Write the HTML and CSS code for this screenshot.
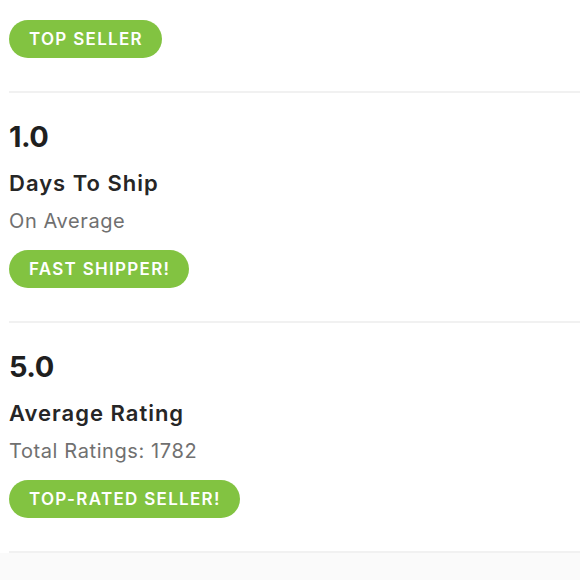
FILE: index.html
```html
<!DOCTYPE html>
<html>
<head>
<meta charset="utf-8">
<link rel="stylesheet" href="styles.css">
</head>
<body>
<div class="page">
  <section class="stat stat-top">
    <span class="badge">TOP SELLER</span>
  </section>
  <section class="stat">
    <div class="value">1.0</div>
    <div class="label">Days To Ship</div>
    <div class="sub">On Average</div>
    <span class="badge">FAST SHIPPER!</span>
  </section>
  <section class="stat">
    <div class="value">5.0</div>
    <div class="label">Average Rating</div>
    <div class="sub">Total Ratings: 1782</div>
    <span class="badge">TOP-RATED SELLER!</span>
  </section>
  <div class="footer"></div>
</div>
</body>
</html>
```
FILE: styles.css
```css
html, body {
  margin: 0;
  padding: 0;
  background: #ffffff;
}
.page {
  font-family: Inter, "Liberation Sans", sans-serif;
  width: 580px;
  height: 580px;
  overflow: hidden;
  display: flex;
  flex-direction: column;
}
.stat {
  margin-left: 9px;
  border-bottom: 2px solid #f1f1f1;
  height: 228px;
  flex-shrink: 0;
  display: flex;
  flex-direction: column;
  align-items: flex-start;
}
.stat-top {
  height: 91px;
}
.stat-top .badge {
  margin-top: 20px;
}
.value {
  margin-top: 26px;
  font-size: 29px;
  font-weight: 700;
  color: #1f1f1f;
  line-height: 36px;
  letter-spacing: -0.5px;
}
.label {
  margin-top: 14px;
  font-size: 22px;
  font-weight: 600;
  color: #262626;
  line-height: 28px;
  letter-spacing: 1px;
}
.sub {
  margin-top: 11px;
  font-size: 20px;
  color: #707070;
  line-height: 26px;
  letter-spacing: 0.6px;
}
.badge {
  margin-top: 16px;
  display: inline-flex;
  align-items: center;
  height: 38px;
  padding: 0 19px 0 20px;
  border-radius: 19px;
  background: #82c341;
  color: #ffffff;
  font-size: 17px;
  font-weight: 600;
  letter-spacing: 1.3px;
}
.footer {
  flex: 1;
  background: #fafafa;
}
```
